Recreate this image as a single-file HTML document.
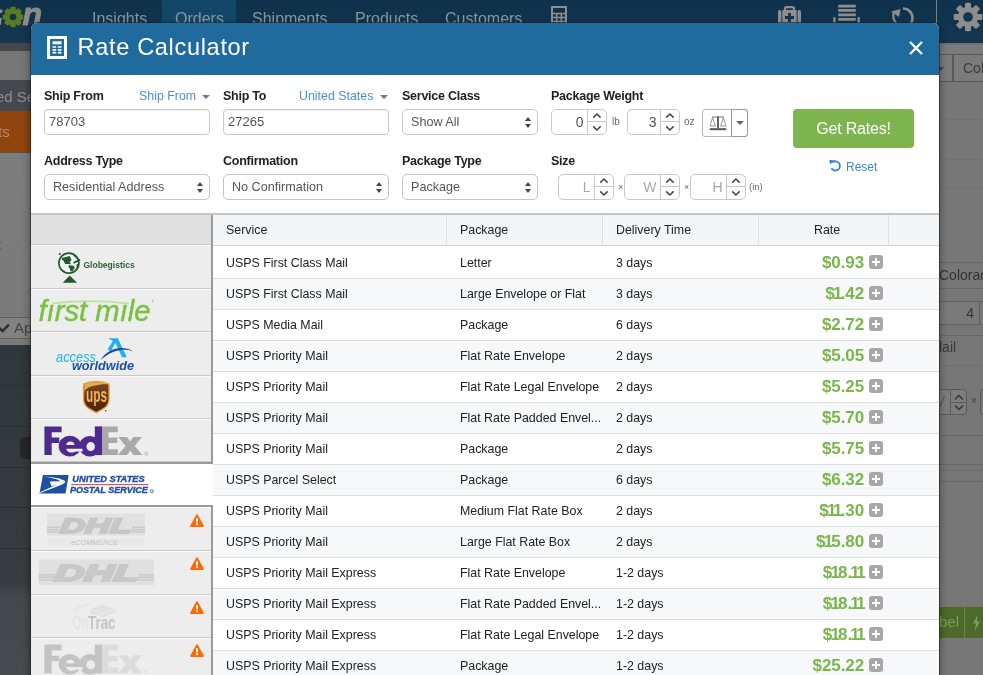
<!DOCTYPE html>
<html>
<head>
<meta charset="utf-8">
<title>Rate Calculator</title>
<style>
*{box-sizing:border-box;margin:0;padding:0}
#bg,#modal,#logos{will-change:transform}
html,body{width:983px;height:675px;overflow:hidden;background:#6d6d6d;font-family:"Liberation Sans",sans-serif;}
.abs{position:absolute}
#bg{position:absolute;left:0;top:0;width:983px;height:675px;overflow:hidden}
#nav{position:absolute;left:0;top:0;width:983px;height:43px;background:linear-gradient(#0f314c,#13384f)}
#nav .tab{position:absolute;top:9.500px;font-size:16px;color:#8797a3;white-space:nowrap}
#modal{position:absolute;left:31px;top:23px;width:908px;height:700px;background:#fff;border-radius:6px 6px 0 0;box-shadow:0 0 0 1px rgba(40,30,20,.55),0 3px 9px rgba(0,0,0,.5)}
#mhead{position:absolute;left:0;top:0;width:908px;height:52px;background:#1f6b9d;border-radius:6px 6px 0 0}
#mtitle{position:absolute;left:46.500px;top:9px;font-size:23.600px;letter-spacing:.65px;color:#fff;white-space:nowrap;line-height:30px}
.lbl{position:absolute;font-size:12.5px;font-weight:700;letter-spacing:-.25px;color:#222;white-space:nowrap;line-height:14px}
.lnk{position:absolute;font-size:12.400px;color:#4a90d0;white-space:nowrap;line-height:14px}
.inp{position:absolute;height:26px;border:1px solid #c9c9c9;border-radius:4px;background:#fff;font-size:13px;color:#555;line-height:24px;padding-left:4px;white-space:nowrap;box-shadow:inset 0 1px 1px rgba(0,0,0,.06)}
.sel{position:absolute;height:26px;border:1px solid #c4c4c4;border-radius:5px;background:#fff;font-size:12.6px;color:#555;line-height:24px;padding-left:8px;white-space:nowrap}
.unit{position:absolute;font-size:10px;color:#666;line-height:12px}
.spin{position:absolute;height:26px;border:1px solid #c9c9c9;border-radius:5px;background:#fff}
.spin .v{position:absolute;right:22.500px;top:0;line-height:24px;font-size:14px;color:#aaa}
.spin i{position:absolute;right:0;top:0;width:19px;height:24px;border-left:1px solid #c9c9c9;background:
 linear-gradient(#c9c9c9,#c9c9c9) 0 11px/19px 1px no-repeat}
.spin i svg{position:absolute;left:0;top:0}
.scale{position:absolute;width:46px;height:28px;border:1px solid #b5b5b5;border-radius:3px;background:#fff}
#gridtop{position:absolute;left:0;top:190px;width:908px;height:2px;background:#c5c5c5}
#grid{position:absolute;left:182px;top:192px;width:726px;height:520px;background:#fff;overflow:hidden}
.gh{position:absolute;left:0;top:0;width:726px;height:31px;background:#f3f6f9;border-bottom:1px solid #d5d8db}
.gh span,.gr span{position:absolute;top:0;line-height:31px;font-size:12.4px;color:#222;white-space:nowrap}
.gh b{position:absolute;top:0;width:1px;height:30px;background:#dde1e5}
.gr{position:absolute;left:0;width:726px;height:31px;border-bottom:1px solid #dcdfe2;background:#fff}
.gr.alt{background:#f7f8fa}
.gr.r0{height:33px}
.gr.r0 span{top:2px}.gr.r0 em{top:1.600px}
.gr.r0 u{top:9px}
.gr em{position:absolute;right:75px;top:-.400px;line-height:30px;font-size:17px;font-weight:700;font-style:normal;color:#79b74a;letter-spacing:-.1px}
.gr em s{text-decoration:none;margin:0 -1.700px}
.gr u{position:absolute;left:656px;top:7px;width:14px;height:14px;border-radius:3px;background:#a8a8a8}
.gr u:before{content:"";position:absolute;left:3px;top:6px;width:8px;height:2px;background:#fff}
.gr u:after{content:"";position:absolute;left:6px;top:3px;width:2px;height:8px;background:#fff}
#side{position:absolute;left:0;top:192px;width:182px;height:520px;background:#ededed;border-right:2px solid #9a9a9a}
#side .sh{position:absolute;left:0;top:0;width:180px;height:30px;background:#e0e0e0;border-bottom:1px solid #c9c9c9}
.ci{position:absolute;left:0;width:180px;border-top:1px solid #fafafa;border-bottom:1px solid #c8c8c8;background:#ededed;overflow:hidden}
.ci.on{width:182px;background:#fff;border-top:2px solid #9a9a9a;border-bottom:2px solid #9a9a9a}
.warn{position:absolute;left:159.100px;top:5.200px}
#c_dhle .warn{top:6px}
</style>
</head>
<body>
<div id="bg">
  
  <!-- below-nav band -->
  <div class="abs" style="left:0;top:43px;width:983px;height:8px;background:linear-gradient(#686868,#787c7c 25%)"></div>
  <div class="abs" style="left:0;top:43px;width:40px;height:8px;background:#45494c"></div>
  <div class="abs" style="left:0;top:51px;width:983px;height:294px;background:linear-gradient(#757575,#7d7d7d 30%,#7a7a7a)"></div>
  <!-- left strip -->
  <div class="abs" style="left:0;top:80px;width:40px;height:31px;background:#43494e;color:#8a9095;font-size:15px;line-height:33px;white-space:nowrap;overflow:hidden"><span style="position:absolute;left:-4px">ed Se</span></div>
  <div class="abs" style="left:0;top:111px;width:40px;height:41px;background:#90450e;color:#b98a6c;font-size:15px;line-height:42px;white-space:nowrap"><span style="position:absolute;left:-2px">ts</span></div>
  <div class="abs" style="left:0;top:152px;width:40px;height:1px;background:#555"></div>
  <div class="abs" style="left:0;top:238px;width:2px;height:14px;color:#555;font-size:15px;line-height:14px;overflow:hidden"><span style="position:absolute;left:-3px">t</span></div>
  <div class="abs" style="left:-2px;top:317px;width:40px;height:22px;background:#828282;border:1px solid #5f5f5f;color:#444;font-size:15px;line-height:20px;white-space:nowrap"><svg class="abs" style="left:0;top:4px" width="11" height="11" viewBox="0 0 11 11"><path d="M.5 6 3.500 9 10 2.500" stroke="#2b2b2b" stroke-width="2.400" fill="none"/></svg><span style="position:absolute;left:15px">Ap</span></div>
  <div class="abs" style="left:0;top:345px;width:983px;height:330px;background:linear-gradient(#30373b,#363c40 72%,#42484c 76%,#454b4f)"></div>
  <div class="abs" style="left:0;top:385px;width:40px;height:1px;background:#2a3033"></div>
  <div class="abs" style="left:0;top:426px;width:40px;height:1px;background:#2a3033"></div>
  <div class="abs" style="left:0;top:467px;width:40px;height:1px;background:#2a3033"></div>
  <div class="abs" style="left:0;top:507px;width:40px;height:1px;background:#2a3033"></div>
  <div class="abs" style="left:0;top:548px;width:40px;height:1px;background:#2a3033"></div>
  <div class="abs" style="left:20px;top:437px;width:20px;height:22px;background:#22272a;border-radius:4px"></div>
  <!-- right strip -->
  <div class="abs" style="left:930px;top:51px;width:53px;height:624px;background:linear-gradient(#7a7d7d,#7a7d7d 3px,#777 4px)"></div>
  <div class="abs" style="left:920px;top:54px;width:33px;height:28px;border:1px solid #595959;background:#7b7b7b"><svg class="abs" style="left:16px;top:12px" width="7" height="4"><path d="M0 0h7l-3.500 4z" fill="#444"/></svg></div>
  <div class="abs" style="left:953px;top:54px;width:40px;height:28px;border:1px solid #595959;background:#7b7b7b;color:#3a3a3a;font-size:14px;line-height:26px;padding-left:9px">Col</div>
  <div class="abs" style="left:930px;top:119px;width:53px;height:1px;background:#6a737a"></div>
  <div class="abs" style="left:930px;top:159px;width:53px;height:1px;background:#6a737a"></div>
  <div class="abs" style="left:930px;top:188px;width:53px;height:1px;background:#6a737a"></div>
  <div class="abs" style="left:930px;top:262px;width:53px;height:1px;background:#666"></div>
  <div class="abs" style="left:939px;top:267px;color:#333;font-size:14px;line-height:16px;white-space:nowrap">Colorad</div>
  <div class="abs" style="left:930px;top:288px;width:53px;height:1px;background:#666"></div>
  <div class="abs" style="left:930px;top:301px;width:50px;height:24px;border:1px solid #606060;border-left:0;background:#7a7a7a;color:#333;font-size:14px;line-height:22px;text-align:right;padding-right:5px">4</div>
  <div class="abs" style="left:980px;top:301px;width:3px;height:24px;border-top:1px solid #606060;border-bottom:1px solid #606060"></div>
  <div class="abs" style="left:930px;top:335px;width:53px;height:1px;background:#666"></div>
  <div class="abs" style="left:939px;top:339px;color:#3a3a3a;font-size:14px;line-height:16px;white-space:nowrap">lail</div>
    <div class="abs" style="left:930px;top:365px;width:53px;height:1px;background:#6e6e6e"></div>
  <div class="abs" style="left:930px;top:389px;width:37px;height:26px;border:1px solid #5a5a5a;border-radius:4px;background:#7d7d7d"><i class="abs" style="left:19px;top:0;width:1px;height:24px;background:#5a5a5a"></i><i class="abs" style="left:20px;top:12px;width:16px;height:1px;background:#5a5a5a"></i><svg class="abs" style="left:23px;top:4px" width="10" height="17" viewBox="0 0 10 17"><path d="M1 5.500 5 1.500 9 5.500M1 11.500 5 15.500 9 11.500" stroke="#333" stroke-width="1.300" fill="none"/></svg><span class="abs" style="left:9px;top:4px;font-size:14px;color:#555;line-height:16px;font-style:italic">/</span></div>
  <div class="abs" style="left:971px;top:395px;color:#444;font-size:10px;line-height:12px">&times;</div>
  <div class="abs" style="left:980px;top:389px;width:6px;height:26px;border:1px solid #5a5a5a;border-radius:4px"></div>
  <div class="abs" style="left:930px;top:435px;width:53px;height:1px;background:#686868"></div>
  <div class="abs" style="left:930px;top:464px;width:53px;height:1px;background:#686868"></div>
  <div class="abs" style="left:930px;top:470px;width:53px;height:1px;background:#6c6c6c"></div>
  <div class="abs" style="left:930px;top:481px;width:53px;height:1px;background:#686868"></div>
  <div class="abs" style="left:930px;top:607px;width:53px;height:31px;background:#4c6a29;color:#7c9c58;font-size:15px;line-height:30px;white-space:nowrap"><span class="abs" style="left:9px">bel</span><i class="abs" style="left:34px;top:0;width:1px;height:31px;background:#6a8748"></i><svg class="abs" style="left:42px;top:8px" width="9" height="16" viewBox="0 0 9 16"><path d="M5.500 0 1 8.500h3L2.500 16 8 6.500H5z" fill="#7c9c58"/></svg></div>
  <div id="nav">
    <div class="abs" style="left:162px;top:0;width:74px;height:43px;background:#13476a"></div>

    <!-- logo -->
    
    <svg class="abs" style="left:2px;top:6px" width="22" height="22" viewBox="-11 -11 22 22"><g fill="#5c7a20"><circle r="7.700"/><g id="gt"><path d="M-2.900-8-2.200-10.200h4.400l.7 2.200v16l-.7 2.200h-4.400l-.7-2.200z"/></g><use href="#gt" transform="rotate(45)"/><use href="#gt" transform="rotate(90)"/><use href="#gt" transform="rotate(135)"/></g><circle r="3.300" fill="#11344e"/></svg>
    <svg class="abs" style="left:0;top:0" width="50" height="40" viewBox="0 0 50 40" font-family="Liberation Sans, sans-serif"><text x="22.500" y="25" font-size="32" font-weight="700" font-style="italic" fill="#8b8b8b" stroke="#8b8b8b" stroke-width=".9">n</text><path d="M0 18h1.800l-1 7H0zM0 9.500h2.600l-.5 3.500H0z" fill="#8b8b8b"/></svg>
    <!-- calculator -->
    <svg class="abs" style="left:551px;top:6px" width="16" height="20" viewBox="0 0 16 20"><rect x="1" y="1" width="14" height="18" fill="none" stroke="#8e8e8e" stroke-width="2"/><path d="M1 7.500h14M1 11.500h14M1 15.500h14M5.700 7.500v12M10.300 7.500v12" stroke="#8e8e8e" stroke-width="1.600"/></svg>
    <!-- first aid -->
    <svg class="abs" style="left:777.500px;top:6px" width="23" height="20" viewBox="0 0 23 20"><path d="M7 4.500V2.700a1.500 1.500 0 0 1 1.500-1.500h6a1.500 1.500 0 0 1 1.500 1.500v1.800" fill="none" stroke="#8e8e8e" stroke-width="2.200"/><rect x="0" y="4" width="3.400" height="16" rx="1.600" fill="#8e8e8e"/><rect x="19.600" y="4" width="3.400" height="16" rx="1.600" fill="#8e8e8e"/><rect x="4.300" y="4" width="14.400" height="16" fill="#8e8e8e"/><path d="M11.500 7v9M7 11.500h9" stroke="#12354e" stroke-width="2.800"/></svg>
    <!-- list -->
    <svg class="abs" style="left:833px;top:4px" width="28" height="20" viewBox="0 0 28 20"><path d="M5.200 2.200h17.600M5.200 6.400h17.600M5.200 10.900h17.600M5.200 15.300h17.600" stroke="#8e8e8e" stroke-width="2.700"/><path d="M1.400 20v-5.800M25.700 20v-5.800" stroke="#8e8e8e" stroke-width="2.400" stroke-linecap="round"/></svg>
    <!-- refresh -->
    <svg class="abs" style="left:890px;top:5px" width="28" height="22" viewBox="0 0 28 22"><path d="M13 3.500a9.500 9.500 0 0 1 9.500 9.500c0 2.500-.8 4.500-2 6" fill="none" stroke="#8e8e8e" stroke-width="2.600"/><path d="M4 6.500c-.7 2-1 4-.5 6.500.4 2.200 1.400 4 2.800 5.500" fill="none" stroke="#8e8e8e" stroke-width="2.200"/><path d="M1 6.500 10.500 4 9 12z" fill="#8e8e8e"/></svg>
    <div class="abs" style="left:936px;top:0;width:1px;height:43px;background:#76838d"></div>
    <!-- gear -->
    <svg class="abs" style="left:953px;top:2px" width="30" height="30" viewBox="-15 -15 30 30"><g fill="#8d8d8d"><circle r="10.200"/><g id="gt2"><rect x="-3" y="-14.300" width="6" height="28.600" rx="1"/></g><use href="#gt2" transform="rotate(45)"/><use href="#gt2" transform="rotate(90)"/><use href="#gt2" transform="rotate(135)"/></g><circle r="4.800" fill="#12354e"/></svg>
    <div class="tab" style="left:92px">Insights</div>
    <div class="tab" style="left:175px">Orders</div>
    <div class="tab" style="left:252px">Shipments</div>
    <div class="tab" style="left:355px">Products</div>
    <div class="tab" style="left:445px">Customers</div>
  </div>
</div>
<div id="modal">
  <div id="mhead">
    <svg class="abs" style="left:16px;top:13px" width="20" height="23" viewBox="0 0 20 23"><rect x="1.500" y="1.500" width="17" height="20" fill="none" stroke="#fff" stroke-width="3"/><rect x="5.500" y="5.300" width="9" height="3" fill="#fff"/><path d="M5.500 11h9M5.500 13.800h9M5.500 16.600h9" stroke="#fff" stroke-width="1.700" stroke-dasharray="3.700 1.600"/></svg>
    <svg class="abs" style="left:878px;top:18px" width="14" height="14" viewBox="0 0 14 14"><path d="M1 1l12 12M13 1 1 13" stroke="#fff" stroke-width="2.300"/></svg>
    <div id="mtitle">Rate Calculator</div>
  </div>
  <div id="form">
    <div class="lbl" style="left:13px;top:66px">Ship From</div>
    <div class="lnk" style="left:108px;top:66px">Ship From</div>
    <svg class="abs" style="left:171px;top:72px" width="8" height="4"><path d="M0 0h8l-4 4z" fill="#777"/></svg>
    <div class="inp" style="left:13px;top:86px;width:166px">78703</div>

    <div class="lbl" style="left:192px;top:66px">Ship To</div>
    <div class="lnk" style="left:268px;top:66px">United States</div>
    <svg class="abs" style="left:349px;top:72px" width="8" height="4"><path d="M0 0h8l-4 4z" fill="#777"/></svg>
    <div class="inp" style="left:192px;top:86px;width:166px">27265</div>

    <div class="lbl" style="left:371px;top:66px">Service Class</div>
    <div class="sel" style="left:371px;top:86px;width:136px">Show All<svg class="abs" style="right:6px;top:7px" width="6" height="11"><path d="M0 4h6l-3-4zM0 7h6l-3 4z" fill="#444"/></svg></div>

    <div class="lbl" style="left:520px;top:66px">Package Weight</div>
    <div class="spin" style="left:520px;top:86px;width:56px"><span class="v" style="color:#555">0</span><i><svg width="18" height="24" viewBox="0 0 18 24"><path d="M5.200 7.600 8.900 4 12.600 7.600M5.200 16.400 8.900 20 12.600 16.400" fill="none" stroke="#444" stroke-width="1.500"/></svg></i></div>
    <div class="unit" style="left:581px;top:93px">lb</div>
    <div class="spin" style="left:596px;top:86px;width:53px"><span class="v" style="color:#555">3</span><i><svg width="18" height="24" viewBox="0 0 18 24"><path d="M5.200 7.600 8.900 4 12.600 7.600M5.200 16.400 8.900 20 12.600 16.400" fill="none" stroke="#444" stroke-width="1.500"/></svg></i></div>
    <div class="unit" style="left:653px;top:93px">oz</div>
    <div class="scale" style="left:671px;top:86px"><i class="abs" style="left:28px;top:-1px;width:17px;height:28px;border:1px solid #999;border-radius:0 3px 3px 0"></i><svg class="abs" style="left:6px;top:6px" width="18" height="15" viewBox="0 0 18 15"><path d="M3 1h12" stroke="#777" stroke-width="1"/><path d="M9 .5v12" stroke="#555" stroke-width="1.800"/><path d="M.8 12.200h16.400v2H.8z" fill="#555"/><path d="M3.600 1.500 1 10h5.400zM14.400 1.500 11.600 10H17z" fill="none" stroke="#888" stroke-width=".9"/></svg><svg class="abs" style="left:33px;top:11px" width="8" height="4"><path d="M0 0h8l-4 4z" fill="#666"/></svg></div>

    <div class="abs" style="left:762px;top:86px;width:121px;height:39px;background:#7eb54e;border-radius:4px;color:#fff;font-size:16px;text-align:center;line-height:39px;letter-spacing:-.2px">Get Rates!</div>
    <svg class="abs" style="left:798px;top:136px" width="13" height="13" viewBox="0 0 13 13"><path d="M3.300 3.400A4.600 4.600 0 1 1 2.400 9.300" fill="none" stroke="#3b86cc" stroke-width="1.800"/><path d="M.3 .8 5.300 1.400 1 5.600z" fill="#3b86cc"/></svg><div class="lnk" style="left:815px;top:137px;font-size:12px;color:#3b86cc">Reset</div>

    <div class="lbl" style="left:13px;top:131px">Address Type</div>
    <div class="sel" style="left:13px;top:151px;width:166px">Residential Address<svg class="abs" style="right:6px;top:7px" width="6" height="11"><path d="M0 4h6l-3-4zM0 7h6l-3 4z" fill="#444"/></svg></div>
    <div class="lbl" style="left:192px;top:131px">Confirmation</div>
    <div class="sel" style="left:192px;top:151px;width:166px">No Confirmation<svg class="abs" style="right:6px;top:7px" width="6" height="11"><path d="M0 4h6l-3-4zM0 7h6l-3 4z" fill="#444"/></svg></div>
    <div class="lbl" style="left:371px;top:131px">Package Type</div>
    <div class="sel" style="left:371px;top:151px;width:136px">Package<svg class="abs" style="right:6px;top:7px" width="6" height="11"><path d="M0 4h6l-3-4zM0 7h6l-3 4z" fill="#444"/></svg></div>
    <div class="lbl" style="left:520px;top:131px">Size</div>
    <div class="spin" style="left:527px;top:151px;width:56px"><span class="v">L</span><i><svg width="18" height="24" viewBox="0 0 18 24"><path d="M5.200 7.600 8.900 4 12.600 7.600M5.200 16.400 8.900 20 12.600 16.400" fill="none" stroke="#444" stroke-width="1.500"/></svg></i></div>
    <div class="unit" style="left:587px;top:158px;font-size:9px">&times;</div>
    <div class="spin" style="left:593px;top:151px;width:56px"><span class="v">W</span><i><svg width="18" height="24" viewBox="0 0 18 24"><path d="M5.200 7.600 8.900 4 12.600 7.600M5.200 16.400 8.900 20 12.600 16.400" fill="none" stroke="#444" stroke-width="1.500"/></svg></i></div>
    <div class="unit" style="left:653px;top:158px;font-size:9px">&times;</div>
    <div class="spin" style="left:659px;top:151px;width:56px"><span class="v">H</span><i><svg width="18" height="24" viewBox="0 0 18 24"><path d="M5.200 7.600 8.900 4 12.600 7.600M5.200 16.400 8.900 20 12.600 16.400" fill="none" stroke="#444" stroke-width="1.500"/></svg></i></div>
    <div class="unit" style="left:718px;top:158px;font-size:9.500px">(in)</div>
  </div>
  <div id="gridtop"></div>
<div id="side"><div class="sh"></div>
<div class="ci" id="c_glob" style="top:30px;height:44px"><!--glob--></div>
<div class="ci" id="c_fm" style="top:74px;height:43px"><!--fm--></div>
<div class="ci" id="c_aw" style="top:117px;height:44px"><!--aw--></div>
<div class="ci" id="c_ups" style="top:161px;height:43px"><!--ups--></div>
<div class="ci" id="c_fedex" style="top:204px;height:43px"><!--fedex--></div>
<div class="ci on" id="c_usps" style="top:247px;height:45px"><!--usps--></div>
<div class="ci" id="c_dhle" style="top:292px;height:44px"><!--dhle--><svg class="warn" width="14" height="13" viewBox="0 0 14 13"><path d="M7 1.100 12.900 12H1.100z" fill="#ff6a00" stroke="#ff6a00" stroke-width="1.800" stroke-linejoin="round"/><rect x="6" y="4.300" width="2" height="4" fill="#fff"/><rect x="6" y="9.300" width="2" height="1.800" fill="#fff"/></svg></div>
<div class="ci" id="c_dhl" style="top:336px;height:43.5px"><!--dhl--><svg class="warn" width="14" height="13" viewBox="0 0 14 13"><path d="M7 1.100 12.900 12H1.100z" fill="#ff6a00" stroke="#ff6a00" stroke-width="1.800" stroke-linejoin="round"/><rect x="6" y="4.300" width="2" height="4" fill="#fff"/><rect x="6" y="9.300" width="2" height="1.800" fill="#fff"/></svg></div>
<div class="ci" id="c_ontrac" style="top:379.5px;height:43.5px"><!--ontrac--><svg class="warn" width="14" height="13" viewBox="0 0 14 13"><path d="M7 1.100 12.900 12H1.100z" fill="#ff6a00" stroke="#ff6a00" stroke-width="1.800" stroke-linejoin="round"/><rect x="6" y="4.300" width="2" height="4" fill="#fff"/><rect x="6" y="9.300" width="2" height="1.800" fill="#fff"/></svg></div>
<div class="ci" id="c_fedexg" style="top:423px;height:44px"><!--fedexg--><svg class="warn" width="14" height="13" viewBox="0 0 14 13"><path d="M7 1.100 12.900 12H1.100z" fill="#ff6a00" stroke="#ff6a00" stroke-width="1.800" stroke-linejoin="round"/><rect x="6" y="4.300" width="2" height="4" fill="#fff"/><rect x="6" y="9.300" width="2" height="1.800" fill="#fff"/></svg></div>
</div>
  <div id="grid">
<div class="gh"><span style="left:13px">Service</span><span style="left:247px">Package</span><span style="left:403px">Delivery Time</span><span style="left:601px">Rate</span><b style="left:233px"></b><b style="left:389px"></b><b style="left:545px"></b><b style="left:675px"></b></div>
<div class="gr r0" style="top:31px"><span style="left:13px">USPS First Class Mail</span><span style="left:247px">Letter</span><span style="left:403px">3 days</span><em>$0.93</em><u></u></div>
<div class="gr alt" style="top:64px"><span style="left:13px">USPS First Class Mail</span><span style="left:247px">Large Envelope or Flat</span><span style="left:403px">3 days</span><em>$<s>1</s>.42</em><u></u></div>
<div class="gr" style="top:95px"><span style="left:13px">USPS Media Mail</span><span style="left:247px">Package</span><span style="left:403px">6 days</span><em>$2.72</em><u></u></div>
<div class="gr alt" style="top:126px"><span style="left:13px">USPS Priority Mail</span><span style="left:247px">Flat Rate Envelope</span><span style="left:403px">2 days</span><em>$5.05</em><u></u></div>
<div class="gr" style="top:157px"><span style="left:13px">USPS Priority Mail</span><span style="left:247px">Flat Rate Legal Envelope</span><span style="left:403px">2 days</span><em>$5.25</em><u></u></div>
<div class="gr alt" style="top:188px"><span style="left:13px">USPS Priority Mail</span><span style="left:247px">Flat Rate Padded Envel...</span><span style="left:403px">2 days</span><em>$5.70</em><u></u></div>
<div class="gr" style="top:219px"><span style="left:13px">USPS Priority Mail</span><span style="left:247px">Package</span><span style="left:403px">2 days</span><em>$5.75</em><u></u></div>
<div class="gr alt" style="top:250px"><span style="left:13px">USPS Parcel Select</span><span style="left:247px">Package</span><span style="left:403px">6 days</span><em>$6.32</em><u></u></div>
<div class="gr" style="top:281px"><span style="left:13px">USPS Priority Mail</span><span style="left:247px">Medium Flat Rate Box</span><span style="left:403px">2 days</span><em>$<s>1</s><s>1</s>.30</em><u></u></div>
<div class="gr alt" style="top:312px"><span style="left:13px">USPS Priority Mail</span><span style="left:247px">Large Flat Rate Box</span><span style="left:403px">2 days</span><em>$<s>1</s>5.80</em><u></u></div>
<div class="gr" style="top:343px"><span style="left:13px">USPS Priority Mail Express</span><span style="left:247px">Flat Rate Envelope</span><span style="left:403px">1-2 days</span><em>$<s>1</s>8.<s>1</s><s>1</s></em><u></u></div>
<div class="gr alt" style="top:374px"><span style="left:13px">USPS Priority Mail Express</span><span style="left:247px">Flat Rate Padded Envel...</span><span style="left:403px">1-2 days</span><em>$<s>1</s>8.<s>1</s><s>1</s></em><u></u></div>
<div class="gr" style="top:405px"><span style="left:13px">USPS Priority Mail Express</span><span style="left:247px">Flat Rate Legal Envelope</span><span style="left:403px">1-2 days</span><em>$<s>1</s>8.<s>1</s><s>1</s></em><u></u></div>
<div class="gr alt" style="top:436px"><span style="left:13px">USPS Priority Mail Express</span><span style="left:247px">Package</span><span style="left:403px">1-2 days</span><em>$25.22</em><u></u></div>
</div>
</div>
<svg id="logos" class="abs" style="left:0;top:0;pointer-events:none" width="983" height="675" viewBox="0 0 983 675" font-family="Liberation Sans, sans-serif">
<defs>
<linearGradient id="ug" x1="0" y1="0" x2="0" y2="1"><stop offset="0" stop-color="#7b4a1f"/><stop offset="1" stop-color="#48210a"/></linearGradient>
<g id="fx_fed">
<path d="M44.400 426.400H61.600V432.200H51.700V437.500H59.300V443H51.700V455.100H44.400z"/>
<ellipse cx="69.850" cy="446.150" rx="11.150" ry="10.350"/>
<ellipse cx="89.800" cy="446.200" rx="10.700" ry="10.300"/>
<rect x="94.800" y="426.400" width="7.200" height="28.700"/>
</g>
<g id="fx_cut" fill="#ededed">
<path d="M66.200 445C66.400 442.700 67.800 441.500 70.300 441.500S74.400 442.700 74.600 445z"/>
<path d="M66.200 448.700H82.500V451.500H75.500C73.500 453.300 67.200 453.300 66.200 448.700z"/>
<ellipse cx="90.700" cy="446.600" rx="4.300" ry="4.500"/>
</g>
<g id="fx_ex">
<path d="M102 426.400H117.800V432.200H108.400V437.600H117.300V443H108.400V449.300H117.800V455.100H102z"/>
<path d="M118.200 437H127L130.200 441.600 133.400 437H142L134.600 446 142.400 455.100H133.400L130.200 450.400 127 455.100H117.800L125.600 446z"/>
</g>
</defs>
<!-- globegistics -->
<g id="l_glob">
<circle cx="68.900" cy="263.150" r="10" fill="#f4f6f4" stroke="#22592f" stroke-width="1.700"/>
<path d="M61.900 257.900 69.700 256.100 71.500 259.700 69.700 262.500 71.500 264.300 68.300 263.900H65.100L63.700 261.100 61.900 259.700z" fill="#22592f"/>
<path d="M68.800 265.200 73.800 265.700 74.700 268 72.400 271.200 70.600 271.600 69.700 268.400 68.300 266.600z" fill="#22592f"/>
<path d="M73.400 263 80 259.600" stroke="#22592f" stroke-width="1.800"/>
<path d="M77.300 263.800c.5 2.300 0 4.600-1.100 6.400M73.500 255.500c1.500.6 2.700 1.600 3.600 2.800" stroke="#22592f" stroke-width="1.300" fill="none"/>
<path d="M69.700 275.500 77.100 282.700H62.700z" fill="#22592f"/>
<circle cx="59.800" cy="254" r="1.100" fill="#22592f"/>
<text x="83.400" y="268.100" font-weight="700" font-size="9.600" textLength="51.300" lengthAdjust="spacingAndGlyphs" fill="#2d5f3b">Globegistics</text>
</g>
<!-- first mile -->
<g id="l_fm">
<text x="38.5" y="320.8" font-style="italic" font-size="29.2" fill="#7ac143" stroke="#7ac143" stroke-width=".45" textLength="112" lengthAdjust="spacingAndGlyphs">f&#305;rst m&#305;le</text>
<path d="M52.5 303.3Q91 298.8 129 303.6" stroke="#bfe09c" stroke-width="1.7" fill="none"/><path d="M151.5 300.3h2.400M152.7 300.3v2" stroke="#7ac143" stroke-width=".6"/>
</g>
<!-- access worldwide -->
<g id="l_aw">
<text x="56" y="361.7" font-style="italic" font-size="14.5" fill="#1fb0ef" textLength="40" lengthAdjust="spacingAndGlyphs">access</text>
<text x="72" y="370.4" font-style="italic" font-weight="700" font-size="13.5" fill="#1a4f9b" textLength="62" lengthAdjust="spacingAndGlyphs">worldwide</text>
<path d="M108 338.3h9.8l9 19h-4.7l-6.7-14.6-4.4 8.2-3.6-1.5 5.6-8.3z" fill="#1fb0ef"/>
<path d="M100.5 360.2c4-7 12-12.2 20-12.2 5 0 9 1.2 12.5 3.2-4-1.2-8-1.7-12-1.2-8 1-15 5.2-20.5 10.2z" fill="#1a4f9b"/>
</g>
<!-- ups -->
<g id="l_ups">
<path d="M83.6 384.2c4-1.8 8-2.4 12.7-2.4s8.700.6 12.700 2.400v15c0 5-3 8-6.500 10l-6.200 3.400-6.200-3.400c-3.500-2-6.500-5-6.500-10z" fill="url(#ug)" stroke="#dfa045" stroke-width="1.4"/>
<path d="M84.400 392.500c.5-5 8-8 24-8.600v-.300c-3.600-1.100-7.200-1.400-12.100-1.400s-8.400.4-11.900 1.900z" fill="#e9ab4f"/>
<text x="86" y="402.200" font-weight="700" font-size="20.500" fill="#f2b457" textLength="21" lengthAdjust="spacingAndGlyphs">ups</text>
<circle cx="105.800" cy="410.800" r=".8" fill="#5a2d0f"/>
</g>
<!-- fedex -->
<g id="l_fedex">
<use href="#fx_fed" fill="#4d2a8c"/><use href="#fx_cut"/><use href="#fx_ex" fill="#a9a9a9"/>
<circle cx="146.300" cy="453.600" r="1.500" fill="none" stroke="#a9a9a9" stroke-width=".8"/>
</g>
<!-- usps -->
<g id="l_usps">
<path d="M42.900 475h25.800l-3.200 18.400H39.500z" fill="#1d4fa3"/>
<path d="M44.500 476.300 58.500 478.200 64.800 480.700 65.300 482.300 62.800 484.300 40.200 493 39.900 492.200 57 484.500 51.500 486.200 49.800 481.600 60.500 481.300 57.500 479.600z" fill="#fff"/>
<g font-weight="700" font-style="italic" font-size="9" fill="#1d4fa3" stroke="#1d4fa3" stroke-width=".35">
<text x="72.300" y="481.800" textLength="72.400" lengthAdjust="spacingAndGlyphs">UNITED STATES</text>
<text x="69.900" y="493.400" textLength="78" lengthAdjust="spacingAndGlyphs">POSTAL SERVICE</text></g>
<rect x="71.300" y="484.100" width="77.200" height="1" fill="#e03a3e"/>
<circle cx="151.800" cy="491.200" r="1.500" fill="none" stroke="#1d4fa3" stroke-width=".8"/>
</g>
<!-- dhl ecommerce -->
<g id="l_dhle">
<rect x="47" y="513.700" width="98" height="22" fill="#e1e1e1"/>
<rect x="47" y="538" width="98" height="7.500" fill="#e9e9e9"/>
<g fill="#c9c9c9"><rect x="47" y="526.500" width="13" height="1.500"/><rect x="47" y="528.800" width="12" height="1.500"/><rect x="47" y="531.100" width="11" height="1.500"/>
<rect x="132" y="526.500" width="13" height="1.500"/><rect x="131" y="528.800" width="14" height="1.500"/><rect x="130" y="531.100" width="15" height="1.500"/></g>
<text x="59.500" y="532.600" font-weight="700" font-style="italic" font-size="20.700" fill="#c6c6c6" stroke="#c6c6c6" stroke-width="1.900" textLength="71" transform="skewX(-6) translate(56 0)" lengthAdjust="spacingAndGlyphs">DHL</text>
<text x="71.300" y="544.700" font-style="italic" font-size="7.500" fill="#c0c0c0" textLength="47" lengthAdjust="spacingAndGlyphs">eCOMMERCE</text>
</g>
<!-- dhl -->
<g id="l_dhl">
<rect x="38.700" y="559.500" width="115.300" height="25.700" fill="#e0e0e0"/>
<g fill="#cacaca"><rect x="38.700" y="574" width="17" height="1.600"/><rect x="38.700" y="576.500" width="16" height="1.600"/><rect x="38.700" y="579" width="15" height="1.600"/>
<rect x="139" y="574" width="15" height="1.600"/><rect x="138" y="576.500" width="16" height="1.600"/><rect x="137" y="579" width="17" height="1.600"/></g>
<text x="54" y="580.600" font-weight="700" font-style="italic" font-size="23.200" fill="#c8c8c8" stroke="#c8c8c8" stroke-width="2.100" textLength="84" transform="skewX(-6) translate(61 0)" lengthAdjust="spacingAndGlyphs">DHL</text>
</g>
<!-- ontrac -->
<g id="l_ontrac">
<path d="M73 612c3-5 9-7.500 17-7" stroke="#e6e6e6" stroke-width="2" fill="none"/>
<path d="M90.500 609.500l11-4.500 14.500 3.500v3.500l-13 5.500-12.500-4.500z" fill="#e1e1e1"/>
<path d="M90.500 609.500l12.500 4 13-5.500" stroke="#ececec" stroke-width=".8" fill="none"/>
<text x="72.200" y="629.400" font-weight="700" font-size="18.500" fill="#e4e4e4" textLength="16" lengthAdjust="spacingAndGlyphs">On</text>
<text x="88" y="629.400" font-weight="700" font-size="18.500" fill="#c4c4c4" textLength="27.500" lengthAdjust="spacingAndGlyphs">Trac</text>
</g>
<!-- fedex grey -->
<g id="l_fedexg" transform="translate(0 218.200)">
<use href="#fx_fed" fill="#c3c3c3"/><use href="#fx_cut"/><use href="#fx_ex" fill="#dcdcdc"/>
<circle cx="146.300" cy="453.600" r="1.500" fill="none" stroke="#dcdcdc" stroke-width=".8"/>
</g>
</svg>
</body>
</html>
